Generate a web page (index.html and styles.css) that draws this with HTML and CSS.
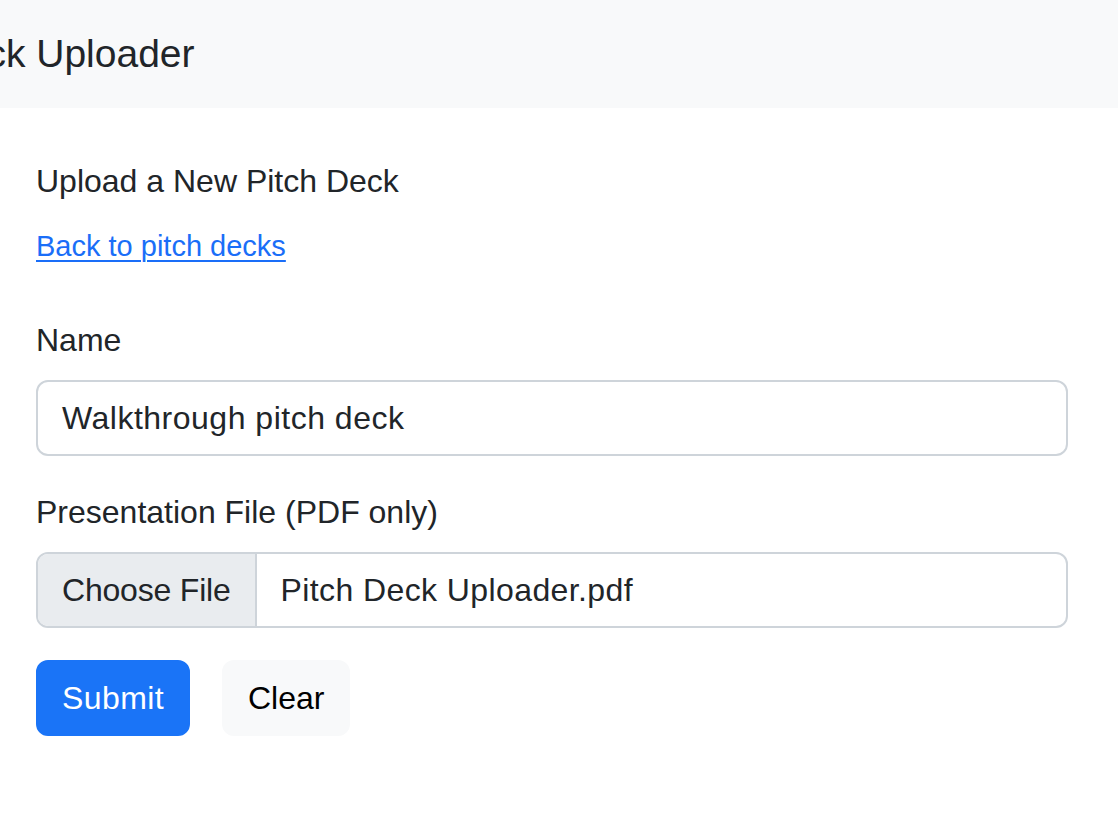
FILE: index.html
```html
<!DOCTYPE html>
<html lang="en">
<head>
<meta charset="utf-8">
<title>Pitch Deck Uploader</title>
<link rel="stylesheet" href="styles.css">
</head>
<body>
<header class="navbar">
  <span class="brand">Pitch Deck Uploader</span>
</header>
<main class="content">
  <h1 class="page-title">Upload a New Pitch Deck</h1>
  <p class="back"><a href="#" class="back-link">Back to pitch decks</a></p>
  <form class="form">
    <div class="field">
      <label class="label" for="name">Name</label>
      <div class="input" id="name">Walkthrough pitch deck</div>
    </div>
    <div class="field">
      <label class="label">Presentation File (PDF only)</label>
      <div class="file-input">
        <span class="file-btn">Choose File</span>
        <span class="file-name">Pitch Deck Uploader.pdf</span>
      </div>
    </div>
    <div class="actions">
      <button type="button" class="btn btn-primary">Submit</button>
      <button type="button" class="btn btn-light">Clear</button>
    </div>
  </form>
</main>
</body>
</html>
```
FILE: styles.css
```css
* { box-sizing: border-box; }
html, body { margin: 0; padding: 0; background: #fff; }
body {
  font-family: "Liberation Sans", Arial, sans-serif;
  font-size: 32px;
  line-height: 48px;
  color: #212529;
  overflow: hidden;
}
.navbar {
  background: #f8f9fa;
  height: 108px;
  display: flex;
  align-items: center;
  overflow: hidden;
}
.brand {
  font-size: 39px;
  line-height: 60px;
  white-space: nowrap;
  margin-left: -161px;
  color: #212529;
}
.content {
  padding: 49px 50px 0 36px;
}
.page-title {
  font-size: 32px;
  font-weight: 400;
  line-height: 48px;
  margin: 0 0 16px;
}
.back { margin: 0 0 46px; }
.back-link {
  font-size: 29px;
  color: #1a6ef8;
  text-decoration: underline;
  text-underline-offset: 4px;
  text-decoration-thickness: 2px;
}
.field { margin-bottom: 32px; }
.label { display: block; margin-bottom: 16px; }
.input {
  height: 76px;
  border: 2px solid #ced4da;
  border-radius: 12px;
  padding: 12px 24px;
  letter-spacing: 0.5px;
}
.file-input {
  height: 76px;
  border: 2px solid #ced4da;
  border-radius: 12px;
  display: flex;
  overflow: hidden;
}
.file-btn {
  background: #e9ecef;
  border-right: 2px solid #ced4da;
  padding: 12px 24px;
  letter-spacing: -0.2px;
}
.file-name { padding: 12px 24px; letter-spacing: 0.4px; }
.actions { display: flex; gap: 32px; }
.btn {
  font-family: inherit;
  font-size: 32px;
  line-height: 48px;
  height: 76px;
  padding: 12px 24px;
  border: 2px solid transparent;
  border-radius: 12px;
  cursor: pointer;
}
.btn-primary { background: #1a74f7; border-color: #1a74f7; color: #fff; letter-spacing: 0.4px; }
.btn-light { background: #f8f9fa; border-color: #f8f9fa; color: #000; }
```
